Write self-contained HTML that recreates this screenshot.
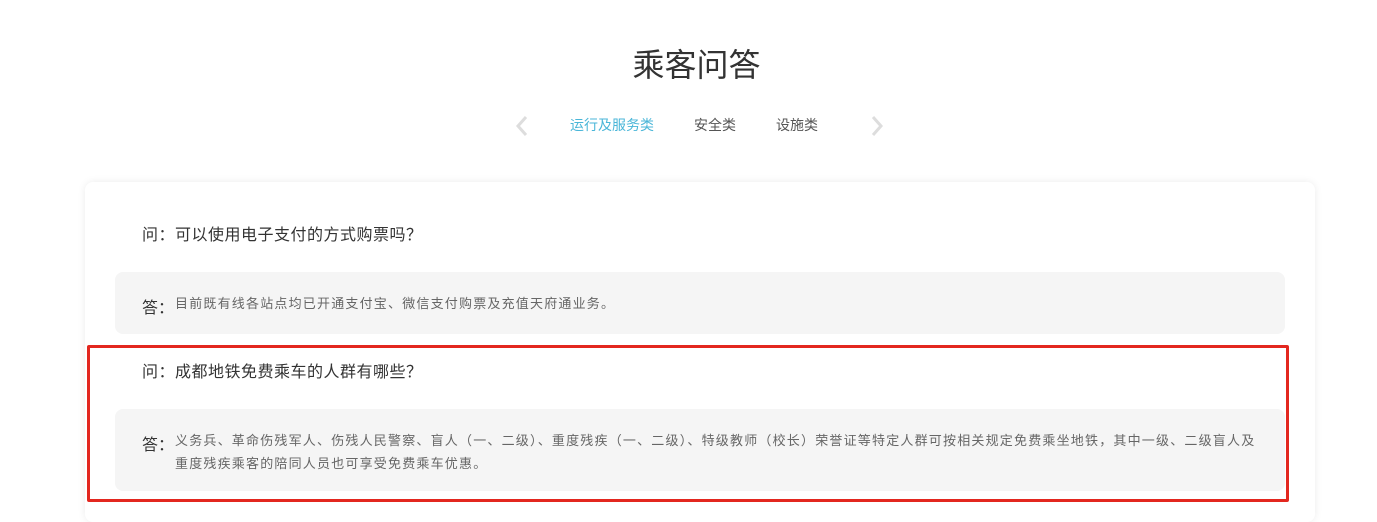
<!DOCTYPE html>
<html><head><meta charset="utf-8"><style>
body{margin:0;width:1377px;height:511px;background:#fff;font-family:"Liberation Sans","Noto Sans CJK SC",sans-serif;overflow:hidden;position:relative}
.title{position:absolute;top:42px;left:8px;width:1377px;text-align:center;font-size:32px;color:#333;line-height:46px;letter-spacing:0px}
.tab{position:absolute;top:116px;font-size:14px;color:#555;line-height:18px}
.card{position:absolute;left:85px;top:182px;width:1230px;height:340px;background:#fff;border-radius:8px;box-shadow:0 0 8px rgba(0,0,0,.08)}
.q{position:absolute;left:142px;font-size:16px;color:#333;letter-spacing:0.5px;line-height:22px}
.a{position:absolute;left:115px;width:1170px;background:#f5f5f5;border-radius:8px}
.a .l{position:absolute;left:27px;font-size:16px;color:#333}
.a .t{position:absolute;left:60px;right:20px;font-size:13px;color:#666;letter-spacing:1.2px;line-height:23px}
.red{position:absolute;left:87px;top:345px;width:1196px;height:151px;border:3px solid #e3271f;border-radius:2px}
</style></head><body>
<div class="title">乘客问答</div>
<svg style="position:absolute;left:514px;top:115px" width="16" height="22"><path d="M12 2 L4 11 L12 20" stroke="#ddd" stroke-width="3" fill="none"/></svg>
<svg style="position:absolute;left:869px;top:115px" width="16" height="22"><path d="M4 2 L12 11 L4 20" stroke="#ddd" stroke-width="3" fill="none"/></svg>
<div class="tab" style="left:570px;color:#4ab6d8">运行及服务类</div>
<div class="tab" style="left:694px">安全类</div>
<div class="tab" style="left:776px">设施类</div>
<div class="card"></div>
<div class="q" style="top:225px">问：可以使用电子支付的方式购票吗？</div>
<div class="a" style="top:272px;height:62px"><span class="l" style="top:22px">答：</span><div class="t" style="top:20px">目前既有线各站点均已开通支付宝、微信支付购票及充值天府通业务。</div></div>
<div class="q" style="top:362px">问：成都地铁免费乘车的人群有哪些？</div>
<div class="a" style="top:409px;height:82px"><span class="l" style="top:22px">答：</span><div class="t" style="top:20px">义务兵、革命伤残军人、伤残人民警察、盲人（一、二级）、重度残疾（一、二级）、特级教师（校长）荣誉证等特定人群可按相关规定免费乘坐地铁，其中一级、二级盲人及<br>重度残疾乘客的陪同人员也可享受免费乘车优惠。</div></div>
<div class="red"></div>
</body></html>
